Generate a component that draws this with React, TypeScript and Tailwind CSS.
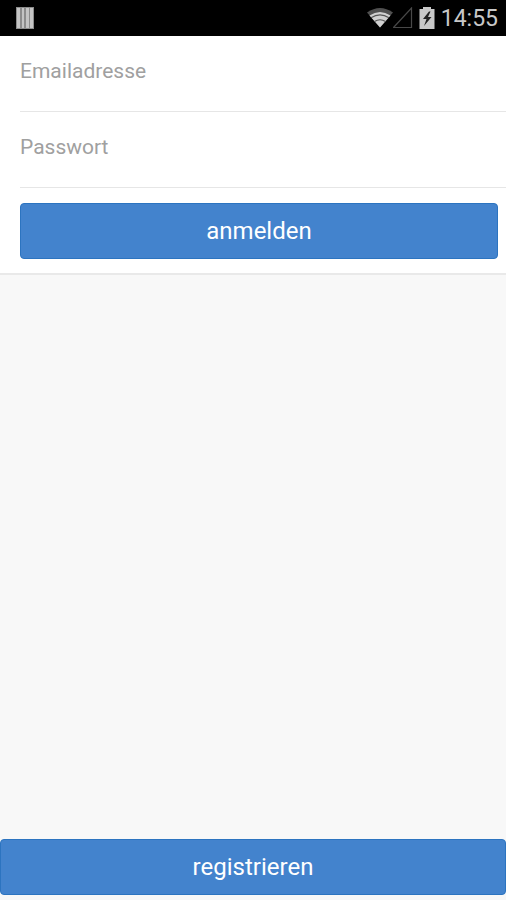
const fields = [
  { id: "email", label: "Emailadresse", type: "email" },
  { id: "password", label: "Passwort", type: "password" },
];

const StatusBar = () => {
  return <header className="flex h-9 items-center justify-between bg-black pr-2 pl-4">
      <svg width="18" height="22" viewBox="0 0 18 22" aria-hidden="true">
        <rect width="18" height="22" fill="#8c8c8c" />
        <path d="M1 1h3v20H1zM6 1h2v20H6zM10 1h3v20h-3zM14 1h3v20h-3z" fill="#c4c4c4" />
      </svg>

      <div className="flex items-center">
        {/* Wifi */}
        <svg width="26" height="22" viewBox="0 0 26 22" aria-hidden="true">
          <path d="M0 5.500Q13 -3.500 26 5.500L13 20.500Z" fill="#505050" />
          <path d="M2.500 8.500Q13 1.500 23.500 8.500L13 20.500Z" fill="#d0d0d0" />
          <path d="M4 10.800Q13 5 22 10.800M7.500 14.500Q13 11 18.500 14.500" fill="none" stroke="#555" strokeWidth="1.200" />
        </svg>

        {/* No signal */}
        <svg width="20" height="22" viewBox="0 0 20 22" aria-hidden="true">
          <path d="M0.500 20.500L18.500 1V20.500Z" fill="none" stroke="#484848" strokeWidth="1.200" />
        </svg>

        {/* Charging battery */}
        <svg className="ml-1.5" width="16" height="22" viewBox="0 0 16 22" aria-hidden="true">
          <path d="M4 0h8v2h3.500v20H0.500V2H4z" fill="#c8c8c8" />
          <path d="M10 4.500L4 12h3.500L5 19l7.500-9H9L11.500 4.500z" fill="#222" />
        </svg>

        <time className="ml-1.5 pt-0.5 text-[23px] leading-8 text-[#c8c8c8]">14:55</time>
      </div>
    </header>;
};

const App = () => {
  return <div className="flex min-h-screen flex-col bg-[#f8f8f8] font-['Roboto',sans-serif]">
      <StatusBar />

      <form className="border-b-2 border-[#e9e9e9] bg-white pb-3.5 pl-5" onSubmit={event => event.preventDefault()}>
        {fields.map(field => <div key={field.id} className="border-b border-[#e6e6e6] pt-5">
            <label htmlFor={field.id} className="block text-[21px] leading-[30px] text-[#a0a0a0]">{field.label}</label>
            <input id={field.id} type={field.type} className="block h-[25px] w-full bg-transparent text-lg text-gray-800 outline-none" />
          </div>)}

        <div className="pt-[15px] pr-2">
          <button type="submit" className="block h-14 w-full rounded-sm border border-[#2c74c0] bg-[#4383cd] text-2xl text-white">
            anmelden
          </button>
        </div>
      </form>

      <footer className="mt-auto pb-[5px]">
        <button type="button" className="block h-14 w-full rounded-sm border border-[#2c74c0] bg-[#4383cd] text-2xl text-white">
          registrieren
        </button>
      </footer>
    </div>;
};

export default App;
